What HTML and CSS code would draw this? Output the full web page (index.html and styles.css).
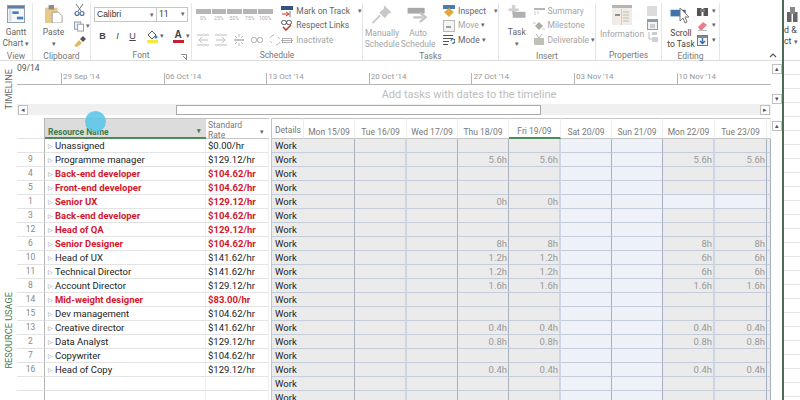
FILE: index.html
```html
<!DOCTYPE html>
<html>
<head>
    <title>Resource Usage</title>
    <link rel="stylesheet" href="styles.css">
</head>
<body>
<div id="window">
    <div class="ribbon">
        <div class="group g-view">
            <div class="group-body center">
                <div class="big-btn">
                    <svg width="20" height="20" viewBox="0 0 20 20"><rect x=".5" y=".5" width="19" height="19" fill="#f7f7f7" stroke="#8a97a8"/><rect x="1" y="1" width="18" height="3" fill="#5f7fa5"/><rect x="2" y="5" width="3" height="13" fill="#d8dde3"/><rect x="6" y="7" width="7" height="3" fill="#3f83c4"/><rect x="11" y="13" width="7" height="3" fill="#3f83c4"/></svg>
                    <span>Gantt<br>Chart <i class="car">&#9662;</i></span>
                </div>
            </div>
            <div class="group-label">View</div>
        </div>
        <div class="group g-clip">
            <div class="group-body">
                <div class="big-btn paste">
                    <svg width="20" height="20" viewBox="0 0 20 20"><rect x="0" y="3" width="14" height="17" fill="#eac888"/><rect x="4" y="0" width="6" height="5" fill="#8c8c8c"/><path d="M8 8h7l4 4v8H8z" fill="#fff" stroke="#9a9a9a"/></svg>
                    <span>Paste<br><i class="car">&#9662;</i></span>
                </div>
                <div class="small-col clip-col">
                    <svg width="11" height="12" viewBox="0 0 11 12"><path d="M2 0l5 7M9 0L4 7" stroke="#6f7b8a" fill="none"/><circle cx="3" cy="9.5" r="2" fill="none" stroke="#4f6f95" stroke-width="1.2"/><circle cx="8" cy="9.5" r="2" fill="none" stroke="#4f6f95" stroke-width="1.2"/></svg>
                    <span class="line"><svg width="11" height="11" viewBox="0 0 11 11"><rect x=".5" y=".5" width="7" height="8" fill="#e8edf3" stroke="#8b98a8"/><rect x="4" y="3" width="6.5" height="7.5" fill="#fff" stroke="#8b98a8"/></svg><i class="car">&#9662;</i></span>
                    <svg width="12" height="11" viewBox="0 0 12 11"><path d="M0 10l5-6 3 3-5 4z" fill="#e8b858"/><path d="M6 3l3-3 3 3-3 3z" fill="#555"/></svg>
                </div>
            </div>
            <div class="group-label">Clipboard</div>
        </div>
        <div class="group g-font">
            <div class="group-body col">
                <div class="combo-row">
                    <div class="combo c-name">Calibri<i class="car">&#9662;</i></div>
                    <div class="combo c-size">11<i class="car">&#9662;</i></div>
                </div>
                <div class="font-row">
                    <b>B</b><em>I</em><u>U</u>
                    <span class="swatch-wrap fill-btn"><svg width="12" height="9" viewBox="0 0 12 9"><path d="M2 5l4-4 4 4-4 4z" fill="#fff" stroke="#555"/><circle cx="10" cy="7" r="1.5" fill="#3f83c4"/></svg><s class="bar yellow"></s></span><i class="car">&#9662;</i>
                    <span class="swatch-wrap color-btn"><span class="a-ltr">A</span><s class="bar red"></s></span><i class="car">&#9662;</i>
                </div>
            </div>
            <div class="group-label">Font<svg class="launcher" width="6" height="6" viewBox="0 0 6 6"><path d="M0 .5h5.5V6M2 2l3 3" stroke="#8a8a8a" fill="none"/></svg></div>
        </div>
        <div class="group g-sched">
            <div class="group-body">
                <div class="sched-left">
                    <div class="pct-row">
                        <span><s></s>0%</span><span><s></s>25%</span><span><s></s>50%</span><span><s></s>75%</span><span><s></s>100%</span>
                    </div>
                    <div class="indent-row">
                        <svg width="12" height="12" viewBox="0 0 12 12"><path d="M0 1h12M0 11h12" stroke="#bbb"/><path d="M11 6H2m3-3L2 6l3 3" stroke="#b5bec9" fill="none"/></svg>
                        <svg width="12" height="12" viewBox="0 0 12 12"><path d="M0 1h12M0 11h12" stroke="#bbb"/><path d="M1 6h9M7 3l3 3-3 3" stroke="#b5bec9" fill="none"/></svg>
                        <svg class="split" width="12" height="12" viewBox="0 0 12 12"><path d="M6 0v3M6 9v3M2 2l2 2M10 2L8 4M2 10l2-2M10 10L8 8" stroke="#bbb"/><rect x="1" y="5" width="10" height="2" fill="#c4c4c4"/></svg>
                        <svg width="12" height="8" viewBox="0 0 12 8"><rect x=".5" y="1.5" width="5" height="5" rx="2" fill="none" stroke="#aaa"/><rect x="6.5" y="1.5" width="5" height="5" rx="2" fill="none" stroke="#aaa"/></svg>
                        <svg width="12" height="12" viewBox="0 0 12 12"><path d="M1 4a5 5 0 0 1 4-3M11 8a5 5 0 0 1-4 3M1 7l2 2M11 5L9 3" stroke="#bbb" fill="none"/></svg>
                    </div>
                </div>
                <div class="small-col text-col">
                    <span class="line"><svg width="12" height="11" viewBox="0 0 12 11"><rect x="0" y="0" width="12" height="4" fill="#34557f"/><path d="M1 8h6M5 6l3 2-3 2" stroke="#c0392b" fill="none"/><path d="M9 5v6" stroke="#777"/></svg>Mark on Track<i class="car far">&#9662;</i></span>
                    <span class="line"><svg width="12" height="11" viewBox="0 0 12 11"><rect x=".5" y=".5" width="5" height="4" rx="2" fill="none" stroke="#555"/><rect x="5.5" y=".5" width="5" height="4" rx="2" fill="none" stroke="#555"/><path d="M2 7l3 3 5-5" stroke="#c0392b" stroke-width="1.5" fill="none"/></svg>Respect Links</span>
                    <span class="line off"><svg width="12" height="11" viewBox="0 0 12 11"><rect x="1.5" y="3.5" width="9" height="4" fill="none" stroke="#b0b0b0"/><path d="M0 5.5h12" stroke="#b0b0b0"/></svg>Inactivate</span>
                </div>
            </div>
            <div class="group-label">Schedule</div>
        </div>
        <div class="group g-tasks">
            <div class="group-body">
                <div class="big-btn off manual">
                    <svg width="22" height="20" viewBox="0 0 22 20"><path d="M13 0l8 8-3 1-4 5-1-1-4-4-1-1 5-4z" fill="#c8c8c8"/><path d="M9 11l-8 8" stroke="#c8c8c8" stroke-width="2"/></svg>
                    <span>Manually<br>Schedule</span>
                </div>
                <div class="big-btn off auto">
                    <svg width="22" height="20" viewBox="0 0 22 20"><rect x="0" y="3" width="18" height="6" fill="#a8a8a8"/><path d="M6 13h10M13 8l6 5-6 5" stroke="#c4c4c4" stroke-width="2.4" fill="none"/></svg>
                    <span>Auto<br>Schedule</span>
                </div>
                <div class="small-col text-col task-col">
                    <span class="line"><svg width="12" height="12" viewBox="0 0 12 12"><rect width="12" height="4" fill="#4a7ab0"/><path d="M6 3l5 4-5 5-5-5z" fill="#e0a93a"/></svg>Inspect<i class="car far">&#9662;</i></span>
                    <span class="line off"><svg width="12" height="12" viewBox="0 0 12 12"><rect x=".5" y=".5" width="11" height="11" fill="#f4f4f4" stroke="#b8b8b8"/><path d="M3 7h5" stroke="#a0a0a0" stroke-width="2"/></svg>Move<i class="car">&#9662;</i></span>
                    <span class="line"><svg width="12" height="12" viewBox="0 0 12 12"><path d="M0 1.5h10M0 4.5h10M0 7.5h6M0 10.5h5" stroke="#555"/><path d="M8 7a2 2 0 1 1 2 2v1" stroke="#2f6fb0" fill="none" stroke-width="1.2"/></svg>Mode<i class="car">&#9662;</i></span>
                </div>
            </div>
            <div class="group-label">Tasks</div>
        </div>
        <div class="group g-insert">
            <div class="group-body">
                <div class="big-btn task">
                    <svg width="20" height="20" viewBox="0 0 20 20"><path d="M4 0h4v4h4v3H8v4H4V7H0V4h4z" fill="#cfcfcf"/><rect x="5" y="8" width="15" height="7" fill="#b0b0b0"/></svg>
                    <span>Task<br><i class="car">&#9662;</i></span>
                </div>
                <div class="small-col text-col off ins-col">
                    <span class="line"><svg width="12" height="10" viewBox="0 0 12 10"><path d="M1 3h11" stroke="#b5b5b5" stroke-width="2"/><path d="M2 5v4M5 5v3" stroke="#ccc"/></svg>Summary</span>
                    <span class="line"><svg width="12" height="12" viewBox="0 0 12 12"><path d="M6 2l4 4-4 4-4-4z" fill="#aab0a0"/><path d="M0 3h3M9 9h3" stroke="#c8c8c8"/></svg>Milestone</span>
                    <span class="line"><svg width="12" height="12" viewBox="0 0 12 12"><rect x="1" y="4" width="10" height="7" fill="#c0c0b4"/><path d="M3 0l3 4 3-4" stroke="#bbb" fill="none"/></svg>Deliverable<i class="car">&#9662;</i></span>
                </div>
            </div>
            <div class="group-label">Insert</div>
        </div>
        <div class="group g-props">
            <div class="group-body">
                <div class="big-btn off info">
                    <svg width="20" height="20" viewBox="0 0 20 20"><rect width="20" height="20" fill="#f1ece6"/><rect width="20" height="3" fill="#b5b5b5"/><rect x="3" y="9" width="5" height="2" fill="#8f8f8f"/><path d="M11 7h6M11 10h6M11 13h6M11 16h6" stroke="#bcbcbc"/><path d="M9.5 4v16" stroke="#ccc"/></svg>
                    <span>Information</span>
                </div>
                <div class="small-col prop-col">
                    <svg width="11" height="11" viewBox="0 0 11 11"><rect width="10" height="10" fill="#dcdcdc"/></svg>
                    <svg width="11" height="11" viewBox="0 0 11 11"><rect x=".5" y=".5" width="10" height="10" fill="#f3f3f3" stroke="#8e9dae"/><rect x="1" y="1" width="9" height="2" fill="#8e9dae"/><path d="M3 6h5M3 8h5" stroke="#aaa"/></svg>
                    <svg width="11" height="11" viewBox="0 0 11 11"><path d="M2 0v7h4" stroke="#bbb" fill="none"/><rect x="5" y="5" width="6" height="5" fill="#c9d2da"/><rect x="5" y="0" width="5" height="3" fill="#ccc"/></svg>
                </div>
            </div>
            <div class="group-label">Properties</div>
        </div>
        <div class="group g-edit">
            <div class="group-body">
                <div class="big-btn scroll">
                    <svg width="22" height="20" viewBox="0 0 22 20"><rect x="0" y="5" width="16" height="7" fill="#4273ad"/></svg>
                    <span>Scroll<br>to Task</span>
                </div>
                <div class="small-col edit-col">
                    <span class="line"><svg width="11" height="10" viewBox="0 0 11 10"><rect x="0" y="2" width="4.5" height="8" fill="#555"/><rect x="6.5" y="2" width="4.5" height="8" fill="#555"/><rect x="3" y="3" width="5" height="3" fill="#777"/></svg><i class="car">&#9662;</i></span>
                    <span class="line"><svg width="11" height="10" viewBox="0 0 11 10"><path d="M1 6l5-5 4 3-5 5H3z" fill="#ec7d8b"/><path d="M1 9.5h9" stroke="#bbb"/></svg><i class="car">&#9662;</i></span>
                    <span class="line"><svg width="11" height="11" viewBox="0 0 11 11"><rect x=".5" y=".5" width="10" height="10" fill="#f4f4f4" stroke="#777"/><rect x="1" y="1" width="9" height="2" fill="#888"/><path d="M5.5 3v5M3 6l2.5 2.5L8 6" stroke="#2f6fb0" stroke-width="1.4" fill="none"/></svg><i class="car">&#9662;</i></span>
                </div>
            </div>
            <div class="group-label">Editing</div>
        </div>
        <div class="ribbon-end"><svg width="8" height="5" viewBox="0 0 8 5"><path d="M1 4l3-3 3 3" stroke="#555" stroke-width="1.2" fill="none"/></svg></div>
    </div>

    <div class="timeline">
        <div class="side-label"><span>TIMELINE</span></div>
        <div class="tl-main">
            <div class="tl-axis">
                <div class="tl-start">09/14</div>
                <div class="tl-date">29 Sep '14</div>
                <div class="tl-date">06 Oct '14</div>
                <div class="tl-date">13 Oct '14</div>
                <div class="tl-date">20 Oct '14</div>
                <div class="tl-date">27 Oct '14</div>
                <div class="tl-date">03 Nov '14</div>
                <div class="tl-date">10 Nov '14</div>
            </div>
            <div class="tl-hint">Add tasks with dates to the timeline</div>
            <div class="hscroll">
                <span class="sbtn">&#9666;</span>
                <span class="thumb"></span>
                <span class="sbtn">&#9656;</span>
            </div>
        </div>
        <div class="vscroll short">
            <span class="sbtn">&#9652;</span>
            <span class="sbtn">&#9662;</span>
        </div>
    </div>

    <div class="usage">
        <div class="side-label green"><span>RESOURCE USAGE</span></div>
        <table class="sheet">
            <colgroup><col class="c-id"><col class="c-res"><col class="c-rate"></colgroup>
            <tr class="head">
                <th></th>
                <th class="res-head">Resource Name<i class="car green-car">&#9662;</i></th>
                <th class="rate-head"><div>Standard<br>Rate</div><i class="car">&#9662;</i></th>
            </tr>
            <tr><td></td><td class="name">Unassigned</td><td>$0.00/hr</td></tr>
            <tr><td>9</td><td class="name">Programme manager</td><td>$129.12/hr</td></tr>
            <tr class="over"><td>4</td><td class="name">Back-end developer</td><td>$104.62/hr</td></tr>
            <tr class="over"><td>5</td><td class="name">Front-end developer</td><td>$104.62/hr</td></tr>
            <tr class="over"><td>1</td><td class="name">Senior UX</td><td>$129.12/hr</td></tr>
            <tr class="over"><td>3</td><td class="name">Back-end developer</td><td>$104.62/hr</td></tr>
            <tr class="over"><td>12</td><td class="name">Head of QA</td><td>$129.12/hr</td></tr>
            <tr class="over"><td>6</td><td class="name">Senior Designer</td><td>$104.62/hr</td></tr>
            <tr><td>10</td><td class="name">Head of UX</td><td>$141.62/hr</td></tr>
            <tr><td>11</td><td class="name">Technical Director</td><td>$141.62/hr</td></tr>
            <tr><td>8</td><td class="name">Account Director</td><td>$129.12/hr</td></tr>
            <tr class="over"><td>14</td><td class="name">Mid-weight designer</td><td>$83.00/hr</td></tr>
            <tr><td>15</td><td class="name">Dev management</td><td>$104.62/hr</td></tr>
            <tr><td>13</td><td class="name">Creative director</td><td>$141.62/hr</td></tr>
            <tr><td>2</td><td class="name">Data Analyst</td><td>$129.12/hr</td></tr>
            <tr><td>7</td><td class="name">Copywriter</td><td>$104.62/hr</td></tr>
            <tr><td>16</td><td class="name">Head of Copy</td><td>$129.12/hr</td></tr>
            <tr><td></td><td></td><td></td></tr>
            <tr><td></td><td></td><td></td></tr>
        </table>
        <table class="grid">
            <colgroup><col class="c-det"><col class="d51"><col class="d52"><col class="d51"><col class="d51"><col class="d52"><col class="d51"><col class="d51"><col class="d52"><col class="d52"><col class="c-rest"></colgroup>
            <tr class="head"><th class="det-head">Details</th><th>Mon 15/09</th><th>Tue 16/09</th><th>Wed 17/09</th><th>Thu 18/09</th><th class="today">Fri 19/09</th><th>Sat 20/09</th><th>Sun 21/09</th><th>Mon 22/09</th><th>Tue 23/09</th><th></th></tr>
            <tr><td>Work</td><td></td><td></td><td></td><td></td><td></td><td></td><td></td><td></td><td></td><td></td></tr>
            <tr><td>Work</td><td></td><td></td><td></td><td>5.6h</td><td>5.6h</td><td></td><td></td><td>5.6h</td><td>5.6h</td><td></td></tr>
            <tr><td>Work</td><td></td><td></td><td></td><td></td><td></td><td></td><td></td><td></td><td></td><td></td></tr>
            <tr><td>Work</td><td></td><td></td><td></td><td></td><td></td><td></td><td></td><td></td><td></td><td></td></tr>
            <tr class="off-next"><td>Work</td><td></td><td></td><td></td><td>0h</td><td>0h</td><td></td><td></td><td></td><td></td><td></td></tr>
            <tr><td>Work</td><td></td><td></td><td></td><td></td><td></td><td></td><td></td><td></td><td></td><td></td></tr>
            <tr><td>Work</td><td></td><td></td><td></td><td></td><td></td><td></td><td></td><td></td><td></td><td></td></tr>
            <tr><td>Work</td><td></td><td></td><td></td><td>8h</td><td>8h</td><td></td><td></td><td>8h</td><td>8h</td><td></td></tr>
            <tr><td>Work</td><td></td><td></td><td></td><td>1.2h</td><td>1.2h</td><td></td><td></td><td>6h</td><td>6h</td><td></td></tr>
            <tr><td>Work</td><td></td><td></td><td></td><td>1.2h</td><td>1.2h</td><td></td><td></td><td>6h</td><td>6h</td><td></td></tr>
            <tr><td>Work</td><td></td><td></td><td></td><td>1.6h</td><td>1.6h</td><td></td><td></td><td>1.6h</td><td>1.6h</td><td></td></tr>
            <tr><td>Work</td><td></td><td></td><td></td><td></td><td></td><td></td><td></td><td></td><td></td><td></td></tr>
            <tr><td>Work</td><td></td><td></td><td></td><td></td><td></td><td></td><td></td><td></td><td></td><td></td></tr>
            <tr><td>Work</td><td></td><td></td><td></td><td>0.4h</td><td>0.4h</td><td></td><td></td><td>0.4h</td><td>0.4h</td><td></td></tr>
            <tr><td>Work</td><td></td><td></td><td></td><td>0.8h</td><td>0.8h</td><td></td><td></td><td>0.8h</td><td>0.8h</td><td></td></tr>
            <tr><td>Work</td><td></td><td></td><td></td><td></td><td></td><td></td><td></td><td></td><td></td><td></td></tr>
            <tr><td>Work</td><td></td><td></td><td></td><td>0.4h</td><td>0.4h</td><td></td><td></td><td>0.4h</td><td>0.4h</td><td></td></tr>
            <tr><td>Work</td><td></td><td></td><td></td><td></td><td></td><td></td><td></td><td></td><td></td><td></td></tr>
            <tr><td>Work</td><td></td><td></td><td></td><td></td><td></td><td></td><td></td><td></td><td></td><td></td></tr>
        </table>
        <div class="vscroll tall"><span class="sbtn">&#9652;</span></div>
    </div>
</div>

<div id="backdrop">
    <div class="back-ribbon">
        <svg width="11" height="15" viewBox="0 0 11 15"><rect x="0" y="5" width="4.5" height="10" fill="#666"/><rect x="6" y="5" width="4.5" height="10" fill="#666"/><rect x="3" y="0" width="5" height="7" fill="#888"/></svg>
        <span>d &amp;<br>ct <i class="car">&#9662;</i></span>
    </div>
    <div class="back-cells"></div>
</div>

<!-- click highlight and mouse pointer from the screen recording -->
<div class="click-dot"></div>
<svg class="pointer" width="12" height="18" viewBox="0 0 12 18"><path d="M1 1v13l3-3 2 5 2-1-2-5h4z" fill="#fff" stroke="#777"/></svg>
</body>
</html>
```

FILE: styles.css
```css
html, body {
    margin: 0;
    height: 400px;
    overflow: hidden;
}

body {
    display: flex;
    position: relative;
    background-color: #fff;
    font-family: Roboto, "Liberation Sans", sans-serif;
    font-size: 9.5px;
    color: #333;
}

i {
    font-style: normal;
}

.car {
    font-size: 7px;
    color: #666;
}

#window {
    width: 782px;
    height: 400px;
    flex: none;
    border-right: 2px solid #4d6b55;
    overflow: hidden;
}

/* ribbon */
.ribbon {
    display: flex;
    height: 60px;
    border-bottom: 1px solid #dedede;
    font-size: 8.5px;
    line-height: 11px;
    color: #666;
}

.group {
    display: flex;
    flex-direction: column;
    flex: none;
    box-sizing: border-box;
    margin-top: 3px;
    border-right: 1px solid #e6e6e6;
}

.g-view { width: 33px; }
.g-clip { width: 58px; }
.g-font { width: 101px; }
.g-sched { width: 171px; }
.g-tasks { width: 136px; }
.g-insert { width: 97px; }
.g-props { width: 66px; }
.g-edit { width: 58px; }

.group-body {
    display: flex;
    height: 47px;
}

.group-body.center {
    justify-content: center;
}

.group-body.col {
    flex-direction: column;
}

.group-label {
    position: relative;
    height: 10px;
    margin-top: 1px;
    text-align: center;
    color: #777;
}

.launcher {
    position: absolute;
    right: 4px;
    top: 4px;
}

.big-btn {
    display: flex;
    flex-direction: column;
    align-items: center;
    gap: 4px;
    padding-top: 2px;
    text-align: center;
}

.big-btn span {
    white-space: nowrap;
}

.off {
    color: #a5a5a5;
}

.paste {
    width: 40px;
    margin-left: 1px;
}

.small-col {
    display: flex;
    flex-direction: column;
    justify-content: space-between;
    height: 43px;
    padding-top: 1px;
}

.line {
    display: flex;
    align-items: center;
    gap: 2px;
    height: 14px;
    white-space: nowrap;
}

.clip-col {
    width: 16px;
    padding-left: 1px;
}

.combo-row {
    display: flex;
    margin: 4px 0 0 3px;
}

.combo {
    display: flex;
    justify-content: space-between;
    align-items: center;
    box-sizing: border-box;
    height: 15px;
    padding: 0 2px;
    border: 1px solid #c6c6c6;
    color: #333;
}

.c-name { width: 63px; font-family: "Liberation Sans", sans-serif; }
.c-size { width: 32px; margin-left: -1px; }

.font-row {
    display: flex;
    align-items: center;
    height: 14px;
    margin: 7px 0 0 6px;
    color: #444;
}

.font-row b, .font-row em, .font-row u {
    width: 15px;
    text-align: center;
    font-size: 9px;
    font-family: "Liberation Sans", sans-serif;
}

.font-row b { margin-left: -2px; }

.swatch-wrap {
    display: flex;
    flex-direction: column;
    align-items: center;
    width: 12px;
}

.fill-btn { margin: 0 2px 0 6px; }
.color-btn { margin: 0 2px 0 8px; }

.a-ltr {
    font: bold 10px/9px "Liberation Sans", sans-serif;
}

.bar {
    display: block;
    width: 11px;
    height: 3px;
    margin-top: 1px;
}

.yellow { background-color: #f3ea3a; }
.red { background-color: #c8202f; }

.sched-left {
    width: 87px;
    padding: 6px 0 0 4px;
}

.pct-row {
    display: flex;
    gap: 1px;
    font-size: 5px;
    line-height: 6px;
    color: #aaa;
    text-align: center;
}

.pct-row span {
    width: 14.5px;
}

.pct-row s {
    display: block;
    height: 5px;
    margin-bottom: 1px;
    background-color: #b5b5b5;
}

.indent-row {
    display: flex;
    align-items: center;
    gap: 6px;
    margin: 13px 0 0 1px;
}

.text-col svg {
    margin-right: 1px;
}

.far {
    margin-left: 6px;
}

.manual {
    width: 40px;
}

.auto {
    width: 34px;
}

.task-col {
    margin-left: 8px;
}

.task {
    width: 26px;
    margin-left: 5px;
}

.task svg {
    margin-bottom: 1px;
}

.ins-col {
    margin-left: 3px;
}

.info {
    width: 44px;
    margin-left: 4px;
}

.prop-col {
    width: 12px;
    margin: 2px 0 0 3px;
    height: 37px;
}

.scroll {
    width: 28px;
    margin-left: 5px;
    color: #444;
}

.edit-col {
    margin-left: 2px;
}

.edit-col .line {
    gap: 4px;
}

.ribbon-end {
    display: flex;
    flex: 1;
    justify-content: flex-end;
    align-items: flex-end;
    padding: 0 5px 2px 0;
}

/* timeline */
.timeline {
    display: flex;
    height: 56px;
}

.side-label {
    display: flex;
    flex: none;
    width: 17px;
    justify-content: center;
    align-items: center;
    font-size: 9.2px;
    color: #666;
}

.side-label span {
    writing-mode: vertical-rl;
    transform: rotate(180deg);
    white-space: nowrap;
}

.tl-main {
    flex: none;
    width: 754px;
}

.tl-axis {
    display: flex;
    box-sizing: border-box;
    height: 24px;
    border-bottom: 1px solid #b4b4b4;
    font-size: 8px;
    color: #999;
}

.tl-start {
    flex: none;
    width: 44px;
    padding-top: 2px;
    font-size: 8.5px;
    color: #555;
}

.tl-date {
    flex: none;
    box-sizing: border-box;
    width: 102.6px;
    height: 11px;
    margin-top: 12px;
    padding-left: 1px;
    border-left: 1px solid #b4b4b4;
    line-height: 8px;
    white-space: nowrap;
}

.tl-hint {
    height: 19px;
    padding-left: 150px;
    text-align: center;
    font-size: 11px;
    line-height: 19px;
    color: #bdbdbd;
}

.hscroll {
    display: flex;
    align-items: center;
    justify-content: space-between;
    height: 11px;
    padding: 0 1px;
    background-color: #f0f0f0;
}

.sbtn {
    display: flex;
    flex: none;
    box-sizing: border-box;
    width: 10px;
    height: 10px;
    justify-content: center;
    align-items: center;
    border: 1px solid #c0c0c0;
    background-color: #fff;
    font-size: 7px;
    line-height: 8px;
    color: #555;
}

.thumb {
    box-sizing: border-box;
    width: 365px;
    height: 10px;
    margin: 0 219px 0 148px;
    border: 1px solid #aaa;
    background-color: #fff;
}

.vscroll {
    display: flex;
    flex-direction: column;
    flex: none;
    width: 11px;
    align-items: center;
}

.vscroll.short {
    height: 40px;
    justify-content: space-between;
    padding-top: 3px;
}

.vscroll.tall {
    padding-top: 3px;
}

/* resource usage tables */
.usage {
    display: flex;
    height: 283px;
    border-top: 1px solid #fff;
}

.usage .side-label {
    align-items: flex-end;
    padding-bottom: 32px;
    box-sizing: border-box;
    height: 283px;
}

.side-label.green {
    color: #3f7a4c;
}

table {
    flex: none;
    table-layout: fixed;
    border-collapse: separate;
    border-spacing: 0;
    box-sizing: border-box;
}

td, th {
    box-sizing: border-box;
    height: 14px;
    padding: 0;
    overflow: hidden;
    white-space: nowrap;
    font-weight: normal;
    line-height: 13px;
}

tr.head th {
    height: 21px;
    font-size: 8.5px;
    line-height: 10px;
    color: #777;
    border-top: 1px solid #c4c4c4;
    border-bottom: 1px solid #c4c4c4;
}

/* left table */
.sheet {
    width: 252px;
    margin-right: 2px;
}

.c-id { width: 28px; }
.c-res { width: 161px; }
.c-rate { width: 63px; }

.sheet td {
    padding-left: 2px;
    border-bottom: 1px solid #e3e3e3;
    border-right: 1px solid #eee;
    color: #222;
}

.sheet td:first-child {
    padding: 0;
    text-align: center;
    font-size: 8.5px;
    color: #888;
    border-right: 1px solid #b4b4b4;
}

.sheet .name {
    padding-left: 3px;
}

.name::before {
    content: "\25B7";
    display: inline-block;
    width: 7px;
    vertical-align: top;
    font-family: "DejaVu Sans", sans-serif;
    font-size: 6px;
    line-height: 13px;
    color: #888;
}

.over td:nth-child(n+2) {
    font-weight: bold;
    color: #d2182b;
}

.over .name::before {
    font-weight: normal;
    color: #888;
}

.sheet tr.head th:first-child {
    border-top: 0;
    border-bottom: 1px solid #e3e3e3;
    border-right: 1px solid #b4b4b4;
}

.sheet tr.head .res-head {
    position: relative;
    padding: 7px 0 0 3px;
    text-align: left;
    background-color: #dcdcdc;
    font-weight: bold;
    color: #3f7a4c;
    border-bottom: 2px solid #4f8a5c;
}

.green-car, .rate-head .car {
    position: absolute;
    right: 5px;
    bottom: 1px;
}

.green-car {
    color: #3f7a4c;
}

.sheet tr.head .rate-head {
    position: relative;
    padding: 1px 0 0 2px;
    text-align: left;
    vertical-align: top;
}

.rate-head div {
    height: 18px;
    overflow: hidden;
}

/* right table */
.grid {
    width: 496px;
    border-left: 1px solid #c4c4c4;
    font-size: 9.5px;
    color: #999;
}

.c-det { width: 32px; }
.d51 { width: 51px; }
.d52 { width: 52px; }
.c-rest { width: 4px; }

.grid td {
    padding-right: 1px;
    text-align: right;
    background-color: #ebebeb;
    border-bottom: 1px solid #c5cdda;
    border-right: 1px solid #a7b0bf;
}

.grid td:first-child {
    padding: 0 0 0 3px;
    text-align: left;
    color: #222;
    border-right: 0;
}

/* weekend columns */
.grid td:nth-child(7), .grid td:nth-child(8), .off-next td:nth-child(9), .off-next td:nth-child(10) {
    background-color: #eef2f8;
}

/* the lighter day boundaries */
.grid td:nth-child(3), .grid td:nth-child(6), .grid td:nth-child(9) {
    border-right: 2px solid #ccd6e6;
}

.grid tr.head th {
    padding-top: 6px;
    border-top: 1px solid #c4c4c4;
    border-bottom: 1px solid #c4c4c4;
    text-align: center;
    border-right: 1px solid #eee;
}

.grid tr.head .det-head {
    padding: 3px 0 0 3px;
    text-align: left;
}

.grid tr.head .today {
    border-bottom: 2px solid #4f8a5c;
}

/* window behind */
#backdrop {
    flex: 1;
    overflow: hidden;
}

.back-ribbon {
    box-sizing: border-box;
    height: 61px;
    padding-top: 7px;
    border-bottom: 1px solid #dedede;
    font-size: 8.8px;
    line-height: 11px;
    color: #444;
    white-space: nowrap;
}

.back-ribbon svg {
    display: block;
    margin: 0 0 3px 3px;
}

.back-cells {
    height: 339px;
    background-image: repeating-linear-gradient(#fff 0, #fff 13px, #e4e4e4 13px, #e4e4e4 14px);
}

/* overlays */
.click-dot {
    position: absolute;
    left: 85px;
    top: 111px;
    width: 21px;
    height: 21px;
    border-radius: 50%;
    background-color: rgba(85, 198, 232, 0.85);
}

.pointer {
    position: absolute;
    left: 679px;
    top: 7px;
}
```
